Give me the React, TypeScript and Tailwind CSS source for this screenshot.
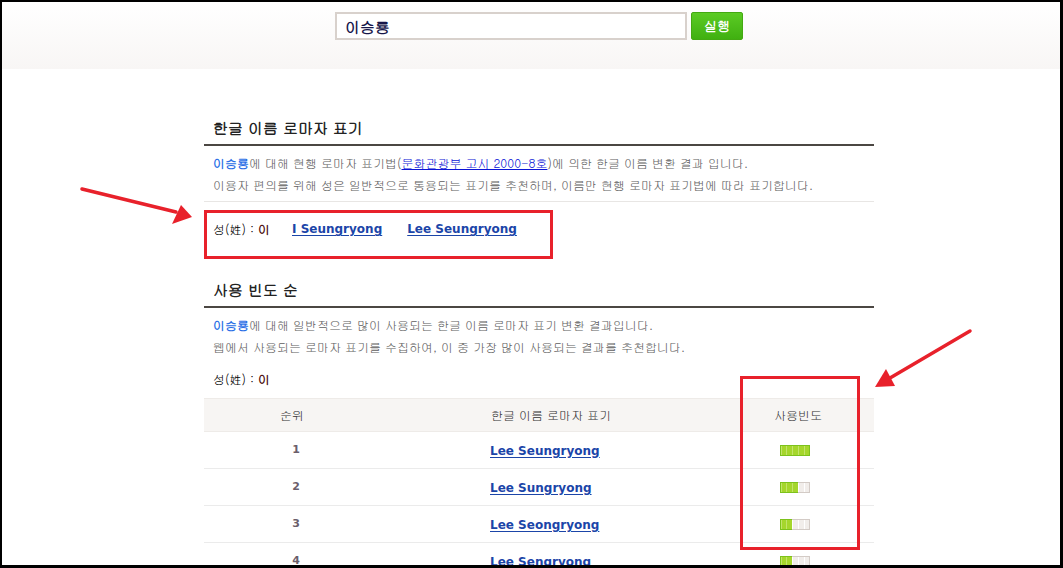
const KR = "font-['Gulim','Noto_Sans_CJK_KR',sans-serif]";
const EN = "font-['DejaVu_Sans','Noto_Sans_CJK_KR',sans-serif]";

const rows = [
  { rank: 1, name: 'Lee Seungryong', level: 5 },
  { rank: 2, name: 'Lee Sungryong', level: 3 },
  { rank: 3, name: 'Lee Seongryong', level: 2 },
  { rank: 4, name: 'Lee Sengryong', level: 2 },
];

function FreqBar({ level }: { level: number }) {
  return (
    <div className="flex h-[11px] w-[31px]">
      {[0, 1, 2, 3, 4].map((i) => (
        <div
          key={i}
          className={
            i < level
              ? 'h-full flex-1 border-y border-[#7dc21c] bg-[#a5d62c] shadow-[inset_1px_0_0_#c2e46a] first:border-l last:border-r'
              : 'h-full flex-1 border-y border-[#d3cbc6] bg-[#f1edea] shadow-[inset_1px_0_0_#ffffff] first:border-l last:border-r'
          }
        />
      ))}
    </div>
  );
}

function SectionTitle({ children }: { children: React.ReactNode }) {
  return (
    <h2 className={`border-b-2 border-[#4b4743] pb-[6px] pl-[9px] text-[15px] leading-[20px] font-bold text-[#222] ${KR}`}>
      {children}
    </h2>
  );
}

function Surname() {
  return (
    <span className={`text-[12px] text-black ${KR}`}>
      성(姓) : <b className="font-black text-[#4a0b0b]">이</b>
    </span>
  );
}

function Name() {
  return <b className="text-[#2a6fe6]">이승룡</b>;
}

export default function App() {
  return (
    <div className="relative h-[568px] w-[1063px] overflow-hidden border-t-2 border-r-[3px] border-b-[3px] border-l-2 border-black bg-white">
      <header className="h-[67px] bg-gradient-to-b from-white to-[#f8f6f5] pt-[10px] pl-[333px]">
        <form className="flex gap-[4px]" onSubmit={(e) => e.preventDefault()}>
          <input
            defaultValue="이승룡"
            className={`h-[28px] w-[352px] border-2 border-[#d8d1cc] bg-white px-[8px] text-[15px] font-black text-[#16164a] outline-none ${KR}`}
          />
          <button
            type="submit"
            className={`h-[28px] w-[52px] rounded-[2px] border border-[#43a912] bg-gradient-to-b from-[#5bcb24] to-[#40b010] text-[13px] font-bold text-white ${KR}`}
          >
            실행
          </button>
        </form>
      </header>

      <main className="ml-[202px] w-[670px]">
        <section className="mt-[49px]">
          <SectionTitle>한글 이름 로마자 표기</SectionTitle>
          <div className={`border-b border-[#e8e6e4] pt-[6px] pb-[5px] pl-[9px] text-[12px] leading-[22px] text-[#5e5e5e] ${KR}`}>
            <p>
              <Name />에 대해 현행 로마자 표기법(
              <a href="#" className="text-[#0b14d6] underline">
                문화관광부 고시 2000-8호
              </a>
              )에 의한 한글 이름 변환 결과 입니다.
            </p>
            <p>이용자 편의를 위해 성은 일반적으로 통용되는 표기를 추천하며, 이름만 현행 로마자 표기법에 따라 표기합니다.</p>
          </div>
          <div className="mt-[17px] flex items-center pl-[9px] leading-[20px]">
            <Surname />
            <a href="#" className={`ml-[22px] text-[12px] font-bold text-[#1b45a8] underline underline-offset-2 ${EN}`}>
              I Seungryong
            </a>
            <a href="#" className={`ml-[25px] text-[12px] font-bold text-[#1b45a8] underline underline-offset-2 ${EN}`}>
              Lee Seungryong
            </a>
          </div>
        </section>

        <section className="mt-[41px]">
          <SectionTitle>사용 빈도 순</SectionTitle>
          <div className={`pt-[6px] pl-[9px] text-[12px] leading-[22px] text-[#5e5e5e] ${KR}`}>
            <p>
              <Name />에 대해 일반적으로 많이 사용되는 한글 이름 로마자 표기 변환 결과입니다.
            </p>
            <p>웹에서 사용되는 로마자 표기를 수집하여, 이 중 가장 많이 사용되는 결과를 추천합니다.</p>
          </div>
          <div className="mt-[10px] pl-[9px] leading-[20px]">
            <Surname />
          </div>

          <table className={`mt-[9px] w-full border-collapse text-[12px] ${KR}`}>
            <thead>
              <tr className="h-[33px] border-y border-[#eeebe8] bg-[#f7f5f3] text-[#333]">
                <th className="w-[176px] font-normal">순위</th>
                <th className="w-[342px] font-normal">한글 이름 로마자 표기</th>
                <th className="font-normal">사용빈도</th>
              </tr>
            </thead>
            <tbody>
              {rows.map((r) => (
                <tr key={r.rank} className="h-[37px] border-b border-[#ebebeb]">
                  <td className={`pl-[8px] text-center text-[11px] font-bold text-[#6b5e6b] ${EN}`}>{r.rank}</td>
                  <td className="pl-[110px]">
                    <a href="#" className={`text-[12px] font-bold text-[#1b45a8] underline underline-offset-2 ${EN}`}>
                      {r.name}
                    </a>
                  </td>
                  <td>
                    <div className="flex justify-center pr-[6px]">
                      <FreqBar level={r.level} />
                    </div>
                  </td>
                </tr>
              ))}
            </tbody>
          </table>
        </section>
      </main>

      {/* annotation overlays */}
      <div className="absolute top-[208px] left-[202px] h-[49px] w-[349px] border-[3px] border-[#e8212b]" />
      <div className="absolute top-[374px] left-[738px] h-[174px] w-[120px] border-[3px] border-[#e8212b]" />
      <svg className="pointer-events-none absolute top-[-2px] left-[-2px]" width="1063" height="568">
        <line x1="82" y1="189" x2="176" y2="212" stroke="#e8212b" strokeWidth="3.5" strokeLinecap="round" />
        <polygon points="192,217 172,224 181,205" fill="#e8212b" />
        <line x1="970" y1="331" x2="890" y2="378" stroke="#e8212b" strokeWidth="3.5" strokeLinecap="round" />
        <polygon points="875,387 886,369 895,386" fill="#e8212b" />
      </svg>
    </div>
  );
}
